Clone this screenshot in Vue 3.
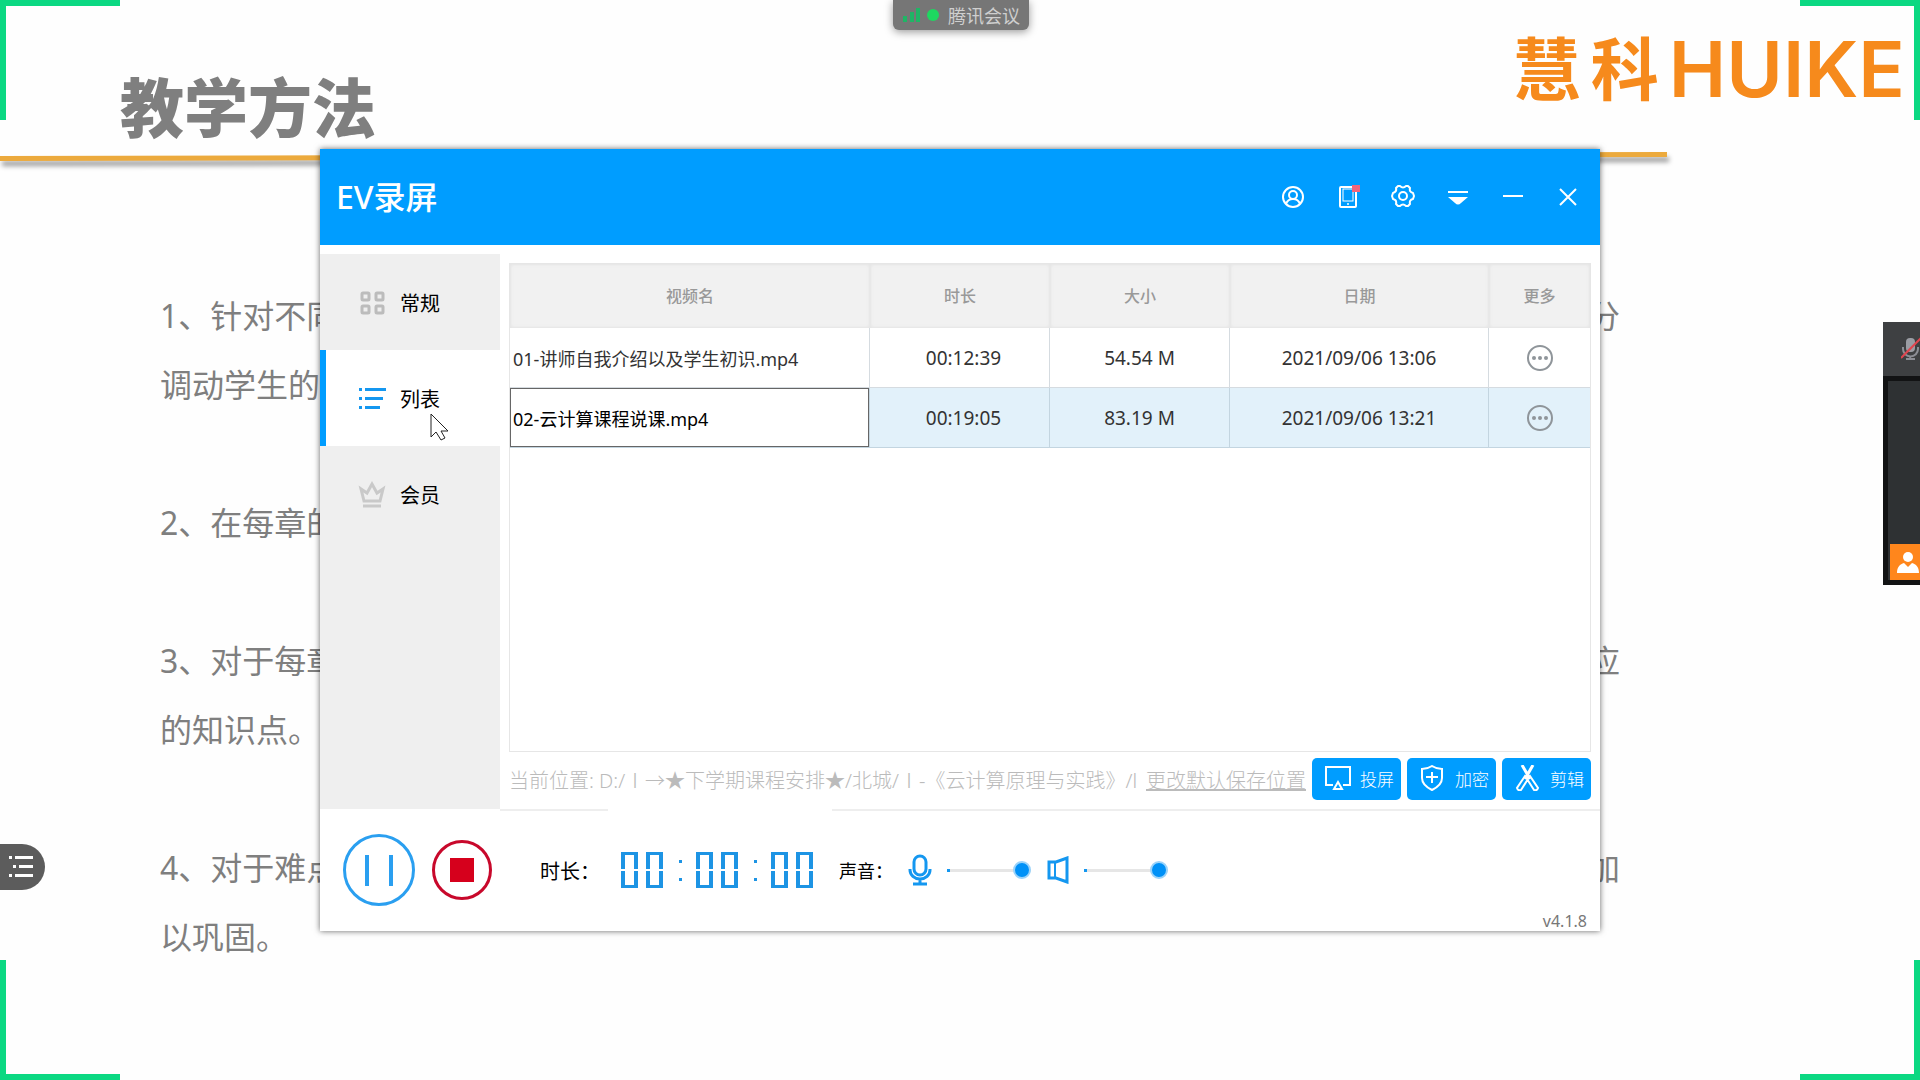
<script setup>
import { ref } from 'vue'

const notes = [
  [['1、针对不同', '分'], ['调动学生的', '']],
  [['2、在每章的', '']],
  [['3、对于每章', '应'], ['的知识点。', '']],
  [['4、对于难点', '加'], ['以巩固。', '']],
]

const tabs = [
  { id: 'general', label: '常规' },
  { id: 'list', label: '列表' },
  { id: 'vip', label: '会员' },
]
const activeTab = ref('list')

const columns = [
  { label: '视频名', cls: 'col-name' },
  { label: '时长', cls: 'col-short' },
  { label: '大小', cls: 'col-short' },
  { label: '日期', cls: 'col-date' },
  { label: '更多', cls: 'col-more' },
]
const videos = ref([
  { id: 1, name: '01-讲师自我介绍以及学生初识.mp4', time: '00:12:39', size: '54.54 M', date: '2021/09/06 13:06', selected: false },
  { id: 2, name: '02-云计算课程说课.mp4', time: '00:19:05', size: '83.19 M', date: '2021/09/06 13:21', selected: true },
])

const clock = '00:00:00'
const micVolume = ref(100)
const speakerVolume = ref(100)
</script>

<template>
  <div class="screen">
    <main class="slide">
      <header class="slide-head">
        <h1>教学方法</h1>
        <div class="brand"><span class="brand-cn">慧</span><span class="brand-cn">科</span><span class="brand-en">HUIKE</span></div>
      </header>
      <div class="slide-rule"></div>
      <div class="notes">
        <p v-for="(note, n) in notes" :key="n">
          <span v-for="(line, l) in note" :key="l" class="note-line">
            <span>{{ line[0] }}</span><span>{{ line[1] }}</span>
          </span>
        </p>
      </div>
    </main>

    <i class="corner tl"></i><i class="corner tr"></i><i class="corner bl"></i><i class="corner br"></i>

    <div class="meeting-pill">
      <svg width="18" height="16" viewBox="0 0 18 16" fill="#1fb565">
        <rect x="0" y="9" width="4" height="6" /><rect x="7" y="5" width="4" height="10" /><rect x="13" y="1" width="4" height="14" />
      </svg>
      <i class="dot"></i>
      <span>腾讯会议</span>
    </div>

    <button class="outline-btn" aria-label="目录">
      <svg width="24" height="22" viewBox="0 0 24 22" fill="#fff">
        <rect x="0" y="0" width="3" height="3" /><rect x="6" y="0" width="18" height="3" />
        <rect x="4" y="9" width="3" height="3" /><rect x="10" y="9" width="14" height="3" />
        <rect x="0" y="18" width="3" height="3" /><rect x="6" y="18" width="18" height="3" />
      </svg>
    </button>

    <aside class="meeting-dock">
      <div class="dock-head">
        <svg width="20" height="24" viewBox="0 0 20 24" fill="none">
          <rect x="5" y="1" width="9" height="14" rx="4" fill="#9a9ca3" />
          <path d="M2 10v2a7 7 0 0 0 15 0v-2M9 19v3M5 22h9" stroke="#8c8e95" stroke-width="2" />
          <path d="M0 21L20 1" stroke="#e0454f" stroke-width="2" />
        </svg>
      </div>
      <div class="dock-video">
        <div class="dock-user">
          <svg width="24" height="24" viewBox="0 0 24 24" fill="#fff">
            <circle cx="11" cy="6" r="5" /><path d="M0 22c0-6 3-9 7-10l4 4 4-4c4 1 7 4 7 10z" />
          </svg>
        </div>
      </div>
    </aside>

    <section class="window">
      <header class="titlebar">
        <h2>EV录屏</h2>
        <nav class="tools">
          <button aria-label="账户">
            <svg width="24" height="24" viewBox="0 0 24 24" class="line">
              <circle cx="12" cy="12" r="10" /><circle cx="12" cy="10" r="4" /><path d="M5 19c1-3 3-5 7-5s6 2 7 5" />
            </svg>
          </button>
          <button aria-label="手机">
            <svg width="24" height="24" viewBox="0 0 24 24" class="line">
              <rect x="4" y="2" width="16" height="20" rx="1" /><rect x="7" y="4" width="10" height="12" stroke-width="1" />
              <circle cx="12" cy="19" r="1" fill="#fff" stroke="none" /><rect x="16" y="0" width="8" height="7" fill="#f2647c" stroke="none" />
            </svg>
          </button>
          <button aria-label="设置">
            <svg width="24" height="24" viewBox="0 0 24 24" class="line">
              <path d="M7 1h2q3 3 6 0h2l2 2q-1 4 3 5l1 3-1 3q-4 1-3 5l-2 2h-2q-3-3-6 0H7l-2-2q1-4-3-5l-1-3 1-3q4-1 3-5z" stroke-linejoin="round" />
              <circle cx="12" cy="11" r="4" />
            </svg>
          </button>
          <button aria-label="菜单">
            <svg width="24" height="24" viewBox="0 0 24 24" fill="#fff">
              <rect x="2" y="6" width="20" height="2" /><path d="M2 12h20l-7 6q-3 3-6 0z" />
            </svg>
          </button>
          <button aria-label="最小化">
            <svg width="24" height="24" viewBox="0 0 24 24" class="line"><path d="M2 11h20" /></svg>
          </button>
          <button aria-label="关闭">
            <svg width="24" height="24" viewBox="0 0 24 24" class="line"><path d="M4 4l16 16M20 4L4 20" /></svg>
          </button>
        </nav>
      </header>

      <div class="body">
        <nav class="sidebar">
          <button v-for="tab in tabs" :key="tab.id" class="tab" :class="{ active: activeTab === tab.id }" @click="activeTab = tab.id">
            <svg v-if="tab.id === 'general'" width="28" height="28" viewBox="0 0 28 28" fill="none" stroke="#bcbcbc" stroke-width="3">
              <rect x="4" y="5" width="7" height="7" rx="1" /><rect x="18" y="5" width="7" height="7" rx="1" />
              <rect x="4" y="18" width="7" height="7" rx="1" /><rect x="18" y="18" width="7" height="7" rx="1" />
            </svg>
            <svg v-else-if="tab.id === 'list'" width="28" height="28" viewBox="0 0 28 28" fill="#1497f0">
              <rect x="1" y="4" width="3" height="3" /><rect x="7" y="4" width="21" height="3" />
              <rect x="1" y="13" width="3" height="3" /><rect x="7" y="13" width="18" height="3" />
              <rect x="1" y="22" width="3" height="3" /><rect x="7" y="22" width="15" height="3" />
            </svg>
            <svg v-else width="28" height="28" viewBox="0 0 28 28" fill="none" stroke="#c9c9c9" stroke-width="3">
              <path d="M6 21L3 9l6 4 5-9 5 9 6-4-3 12zM5 26h18" />
            </svg>
            <span>{{ tab.label }}</span>
          </button>
        </nav>

        <div class="content">
          <div class="list">
            <table>
              <thead>
                <tr><th v-for="c in columns" :key="c.label" :class="c.cls">{{ c.label }}</th></tr>
              </thead>
              <tbody>
                <tr v-for="v in videos" :key="v.id" :class="{ selected: v.selected }">
                  <td class="name">
                    <input v-if="v.selected" v-model="v.name" type="text" aria-label="视频名" />
                    <template v-else>{{ v.name }}</template>
                  </td>
                  <td class="time">{{ v.time }}</td>
                  <td>{{ v.size }}</td>
                  <td>{{ v.date }}</td>
                  <td>
                    <button class="more" aria-label="更多">
                      <svg width="28" height="28" viewBox="0 0 28 28" fill="none">
                        <circle cx="14" cy="14" r="12" stroke="#8f959a" stroke-width="2" />
                        <g fill="#8f959a"><circle cx="8" cy="14" r="2" /><circle cx="14" cy="14" r="2" /><circle cx="20" cy="14" r="2" /></g>
                      </svg>
                    </button>
                  </td>
                </tr>
              </tbody>
            </table>
          </div>

          <div class="location">
            <span class="path">当前位置: D:/Ⅰ→★下学期课程安排★/北城/Ⅰ-《云计算原理与实践》/l</span>
            <a href="#">更改默认保存位置</a>
            <div class="actions">
              <button>
                <svg width="26" height="26" viewBox="0 0 26 26" class="line">
                  <path d="M8 20H1V2h24v18h-7M13 17l-4 7h8z" />
                </svg>
                <span>投屏</span>
              </button>
              <button>
                <svg width="26" height="26" viewBox="0 0 26 26" class="line">
                  <path d="M12 1c3 2 6 3 10 3v9c0 6-4 9-10 12C6 22 2 19 2 13V4c4 0 7-1 10-3zM12 7v11M6 12h12" />
                </svg>
                <span>加密</span>
              </button>
              <button>
                <svg width="26" height="26" viewBox="0 0 26 26" class="line">
                  <path d="M7 0l8 14M18 0l-8 14" stroke-width="3" />
                  <path d="M10 11l3 3-7 11q-3 1-4-2zM15 11l-3 3 7 11q3 1 4-2z" />
                </svg>
                <span>剪辑</span>
              </button>
            </div>
          </div>
        </div>
      </div>

      <div class="divider"><i></i><i></i></div>

      <footer class="footer">
        <div class="controls">
          <button class="pause" aria-label="暂停"><i></i><i></i></button>
          <button class="stop" aria-label="停止"><i></i></button>
          <span class="duration">时长：</span>
          <div class="clock" role="timer">
            <span v-for="(ch, i) in clock" :key="i" :class="ch === ':' ? 'colon' : 'digit'">{{ ch }}</span>
          </div>
          <span class="sound">声音：</span>
          <svg width="24" height="32" viewBox="0 0 24 32" fill="none" stroke="#1497f0" stroke-width="3">
            <rect x="6" y="2" width="12" height="19" rx="6" /><path d="M2 15v1a10 9 0 0 0 20 0v-1M12 25v5M5 30h14" />
          </svg>
          <input v-model="micVolume" type="range" min="0" max="100" aria-label="麦克风音量" />
          <svg width="22" height="28" viewBox="0 0 22 28" fill="none" stroke="#1497f0">
            <path d="M2 6h7l11-4v24L9 22H2z" stroke-width="3" /><path d="M8 6v16" stroke-width="2" />
          </svg>
          <input v-model="speakerVolume" type="range" min="0" max="100" aria-label="扬声器音量" />
        </div>
        <span class="version">v4.1.8</span>
      </footer>

      <svg class="pointer" width="22" height="30" viewBox="0 0 22 30" fill="#fff" stroke="#222">
        <path d="M1 1v23l5-5 5 8 4-2-4-7h7z" />
      </svg>
    </section>
  </div>
</template>

<style>
body {
  margin: 0;
  background: #fefefe;
}
</style>

<style scoped>
* {
  box-sizing: border-box;
}

.screen {
  position: relative;
  min-height: 100vh;
  overflow: hidden;
  background: #fefefe;
  font-family: "Noto Sans", "Noto Sans CJK SC", sans-serif;
}

button {
  padding: 0;
  border: 0;
  background: none;
  font: inherit;
  color: inherit;
}

svg {
  display: block;
  flex: none;
}

.line {
  fill: none;
  stroke: #fff;
  stroke-width: 2;
}

/* slide behind the recorder */
.slide-head {
  display: flex;
  justify-content: space-between;
  align-items: flex-start;
  height: 154px;
  padding: 0 15px 0 120px;
}

h1 {
  margin: 68px 0 0;
  font-size: 64px;
  line-height: 80px;
  font-weight: 900;
  color: #7f7f7f;
}

.brand {
  display: flex;
  align-items: center;
  gap: 10px;
  height: 80px;
  margin-top: 29px;
  color: #f68a1c;
  white-space: nowrap;
}

.brand-cn {
  font-size: 68px;
  line-height: 80px;
  font-weight: 700;
}

.brand-en {
  font-family: Inter, sans-serif;
  font-size: 77px;
  line-height: 80px;
  font-weight: 600;
}

.slide-rule {
  height: 5px;
  margin-right: 253px;
  background: #ecaa3d;
  box-shadow: 2px 5px 5px rgba(0, 0, 0, 0.4);
  transform: rotate(-0.14deg);
}

.notes {
  padding: 122px 300px 108px 160px;
  font-size: 32px;
  line-height: 69px;
  color: #7f7f7f;
}

.notes p {
  margin: 0 0 69px;
}

.notes p:last-child {
  margin: 0;
}

.note-line {
  display: flex;
  justify-content: space-between;
}

/* capture frame corners */
.corner {
  position: absolute;
  width: 120px;
  height: 120px;
  border: 0 solid #0bd882;
}

.tl { top: 0; left: 0; border-width: 6px 0 0 6px; }
.tr { top: 0; right: 0; border-width: 6px 6px 0 0; }
.bl { bottom: 0; left: 0; border-width: 0 0 6px 6px; }
.br { bottom: 0; right: 0; border-width: 0 6px 6px 0; }

/* meeting overlays */
.meeting-pill {
  position: absolute;
  top: 0;
  left: 50%;
  display: flex;
  align-items: center;
  width: 136px;
  height: 30px;
  margin-left: -67px;
  padding-left: 10px;
  border-radius: 0 0 6px 6px;
  background: #767676;
  box-shadow: 0 2px 8px rgba(0, 0, 0, 0.4);
  font-size: 18px;
  color: #cfcfcf;
}

.dot {
  width: 12px;
  height: 12px;
  margin: 0 9px 0 6px;
  border-radius: 50%;
  background: #1ed760;
}

.outline-btn {
  position: absolute;
  top: 844px;
  left: 0;
  width: 45px;
  height: 46px;
  padding-left: 9px;
  border-radius: 0 23px 23px 0;
  background: #5c5c5c;
}

.meeting-dock {
  position: absolute;
  top: 322px;
  right: 0;
  width: 37px;
  background: #121314;
  overflow: hidden;
}

.dock-head {
  height: 54px;
  padding: 15px 0 0 18px;
  background: #3e4042;
}

.dock-video {
  display: flex;
  align-items: flex-end;
  height: 199px;
  margin: 5px 0 5px 5px;
  background: #2e3133;
}

.dock-user {
  flex: 1;
  height: 36px;
  margin-left: 2px;
  padding: 7px 0 0 7px;
  background: #ff861c;
}

/* recorder window */
.window {
  position: absolute;
  top: 149px;
  left: 320px;
  right: 320px;
  background: #fff;
  box-shadow: 0 0 6px rgba(0, 0, 0, 0.6);
  color: #000;
}

.titlebar {
  display: flex;
  align-items: center;
  justify-content: space-between;
  height: 96px;
  padding: 0 5px 0 16px;
  background: #009dff;
  color: #fff;
}

h2 {
  margin: 0;
  font-size: 32px;
  line-height: 40px;
  font-weight: 500;
}

.tools {
  display: flex;
}

.tools button {
  display: flex;
  justify-content: center;
  width: 55px;
}

.body {
  display: flex;
  padding-top: 9px;
}

.sidebar {
  width: 180px;
  background: #efefef;
}

.tab {
  display: flex;
  align-items: center;
  gap: 14px;
  width: 100%;
  height: 96px;
  padding-left: 38px;
  font-size: 20px;
}

.tab.active {
  padding-left: 32px;
  border-left: 6px solid #009dff;
  background: #fff;
}

.content {
  flex: 1;
  min-width: 0;
  padding: 9px;
}

.list {
  min-height: 489px;
  border: 1px solid #e6e6e6;
}

table {
  width: 100%;
  border-collapse: separate;
  border-spacing: 0;
  table-layout: fixed;
}

.col-name { width: 360px; }
.col-short { width: 180px; }
.col-more { width: 101px; }

th {
  height: 64px;
  padding: 0 0 2px;
  background: #f1f1f1;
  box-shadow: inset 0 0 3px 1px #e4e4e4;
  font-size: 16px;
  font-weight: 500;
  color: #999;
}

td {
  height: 60px;
  padding: 0;
  border-right: 1px solid #d5dbe0;
  border-bottom: 1px solid #d5dbe0;
  font-size: 19px;
  text-align: center;
  color: #333;
}

td:last-child {
  border-right: 0;
}

.selected td {
  border-color: #c3d5e0;
  background: #e2f1fa;
}

td.time {
  padding-left: 8px;
}

td.name {
  padding-left: 3px;
  font-size: 18px;
  text-align: left;
  white-space: nowrap;
}

.selected td.name {
  padding: 0;
}

td input {
  display: block;
  width: 100%;
  height: 59px;
  padding: 0 2px;
  border: 1px solid #666;
  border-radius: 0;
  outline: 0;
  background: #fff;
  font: inherit;
  color: #000;
}

.more {
  display: block;
  margin: 0 auto;
}

.location {
  display: flex;
  align-items: center;
  height: 42px;
  margin-top: 6px;
  font-size: 20px;
  font-weight: 300;
  color: #bbb;
  white-space: nowrap;
}

.path {
  flex: 1;
  min-width: 0;
  overflow: hidden;
}

.location a {
  margin: 0 6px 0 3px;
  color: #bbb;
}

.actions {
  display: flex;
  gap: 6px;
}

.actions button {
  display: flex;
  align-items: center;
  gap: 9px;
  width: 89px;
  height: 42px;
  padding: 0 0 2px 13px;
  border-radius: 5px;
  background: #009dff;
  font-size: 17px;
  color: #fff;
}

.divider {
  display: flex;
  justify-content: space-between;
  padding-left: 180px;
}

.divider i {
  width: 108px;
  height: 2px;
  background: #eee;
}

.divider i:last-child {
  flex: 1;
  margin-left: 224px;
}

.footer {
  display: flex;
  justify-content: space-between;
}

.controls {
  display: flex;
  align-items: center;
  padding: 23px 0 25px 23px;
}

.pause,
.stop {
  display: flex;
  align-items: center;
  justify-content: center;
  border-radius: 50%;
}

.pause {
  gap: 20px;
  width: 72px;
  height: 72px;
  border: 3px solid #2a9ff0;
}

.pause i {
  width: 4px;
  height: 31px;
  background: #2a9ff0;
}

.stop {
  width: 60px;
  height: 60px;
  margin: 0 48px 0 17px;
  border: 3px solid #c8082b;
}

.stop i {
  width: 24px;
  height: 24px;
  background: #d6001c;
}

.duration {
  width: 81px;
  font-size: 20px;
}

.sound {
  width: 69px;
  font-size: 18px;
}

/* seven-segment style counter: the segments are painted by borders */
.clock {
  display: flex;
  align-items: center;
  gap: 8px;
  width: 218px;
  font-size: 15px;
  line-height: 30px;
  text-align: center;
  color: transparent;
}

.digit {
  position: relative;
  width: 17px;
  height: 36px;
  border: solid #1d94e4;
  border-width: 3px 4px;
}

.digit::after {
  content: "";
  position: absolute;
  top: 14px;
  left: -4px;
  width: 17px;
  height: 2px;
  background: #fff;
}

.colon {
  width: 17px;
  height: 21px;
  border: solid transparent;
  border-width: 0 6px 0 8px;
  line-height: 21px;
  background: linear-gradient(#1d94e4 3px, transparent 3px 18px, #1d94e4 18px) padding-box;
}

input[type="range"] {
  appearance: none;
  width: 84px;
  height: 18px;
  margin: 0 16px 0 15px;
  background: linear-gradient(90deg, #1497f0 3px, #e6e6e6 3px) 0 center / 100% 3px no-repeat;
}

input[type="range"]::-webkit-slider-thumb {
  appearance: none;
  width: 18px;
  height: 18px;
  border: 2px solid #9bd3fa;
  border-radius: 50%;
  background: #0091f7;
}

.version {
  align-self: flex-end;
  padding: 0 13px 1px 0;
  font-size: 16px;
  line-height: 18px;
  color: #777;
}

.pointer {
  position: absolute;
  top: 264px;
  left: 110px;
}
</style>
